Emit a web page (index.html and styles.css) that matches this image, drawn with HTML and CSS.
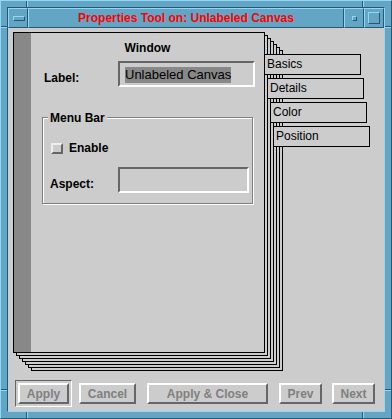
FILE: index.html
```html
<!DOCTYPE html>
<html lang="en">
  <head>
    <meta charset="UTF-8" />
    <title>Properties Tool on: Unlabeled Canvas</title>
    <link rel="stylesheet" href="styles.css">
  </head>
  <body>
    <div class="frame">
      <div class="frame-inner">
        <div class="titlebar">
          <div class="tb-btn"><span class="menu-icon"></span></div>
          <div class="tb-title">Properties Tool on: Unlabeled Canvas</div>
          <div class="tb-btn"><span class="min-icon"></span></div>
          <div class="tb-btn"><span class="max-icon"></span></div>
        </div>

        <div class="client">
          <div class="notebook">
            <div class="page">
              <div class="binding"></div>
              <div class="page-body">
                <div class="heading">Window</div>

                <div class="form-row label-row">
                  <span class="row-label">Label:</span>
                  <div class="field field-label"><span class="selected">Unlabeled Canvas</span></div>
                </div>

                <div class="group">
                  <div class="group-title">Menu Bar</div>
                  <div class="check-row">
                    <span class="checkbox"></span>
                    <span class="check-text">Enable</span>
                  </div>
                  <div class="form-row aspect-row">
                    <span class="row-label">Aspect:</span>
                    <div class="field field-aspect"></div>
                  </div>
                </div>
              </div>
            </div>

            <div class="tabs">
              <div class="tab">Basics</div>
              <div class="tab">Details</div>
              <div class="tab">Color</div>
              <div class="tab">Position</div>
            </div>
          </div>

          <div class="actions">
            <div class="default-ring"><button class="btn btn-apply">Apply</button></div>
            <button class="btn btn-cancel">Cancel</button>
            <button class="btn btn-close">Apply &amp; Close</button>
            <button class="btn btn-prev">Prev</button>
            <button class="btn btn-next">Next</button>
          </div>
        </div>
      </div>
    </div>
  </body>
</html>
```

FILE: styles.css
```css
body {
  margin: 0;
  font-family: "Liberation Sans", Arial, sans-serif;
  font-size: 12px;
  line-height: 14px;
  color: #000;
}

/* window manager frame */
.frame {
  width: 392px;
  height: 419px;
  box-sizing: border-box;
  border: 1px solid;
  border-color: #94d6f4 #2b5870 #2b5870 #94d6f4;
  padding: 6px;
  background-color: #63a5c5;
  background-repeat: no-repeat;
  background-image:
    linear-gradient(to right, #2b5870 0 1px, #94d6f4 1px 2px),
    linear-gradient(to right, #2b5870 0 1px, #94d6f4 1px 2px),
    linear-gradient(to right, #2b5870 0 1px, #94d6f4 1px 2px),
    linear-gradient(to right, #2b5870 0 1px, #94d6f4 1px 2px),
    linear-gradient(to bottom, #2b5870 0 1px, #94d6f4 1px 2px),
    linear-gradient(to bottom, #2b5870 0 1px, #94d6f4 1px 2px),
    linear-gradient(to bottom, #2b5870 0 1px, #94d6f4 1px 2px),
    linear-gradient(to bottom, #2b5870 0 1px, #94d6f4 1px 2px);
  background-size: 2px 6px, 2px 6px, 2px 6px, 2px 6px, 6px 2px, 6px 2px, 6px 2px, 6px 2px;
  background-position:
    left 25px top 0,
    right 27px top 0,
    left 25px bottom 0,
    right 27px bottom 0,
    left 0 top 25px,
    right 0 top 25px,
    left 0 bottom 27px,
    right 0 bottom 27px;
}

.frame-inner {
  height: 100%;
  box-sizing: border-box;
  border: 1px solid;
  border-color: #2b5870 #94d6f4 #94d6f4 #2b5870;
  display: flex;
  flex-direction: column;
}

.titlebar {
  display: flex;
  height: 20px;
}

.tb-btn,
.tb-title {
  box-sizing: border-box;
  border: 1px solid;
  border-color: #94d6f4 #2b5870 #2b5870 #94d6f4;
}

.tb-btn {
  width: 20px;
  display: flex;
  align-items: center;
  justify-content: center;
}

.tb-title {
  flex: 1;
  text-align: center;
  color: #ff0000;
  font-weight: bold;
  font-size: 12px;
  line-height: 18px;
}

.menu-icon,
.min-icon,
.max-icon {
  display: block;
  box-sizing: border-box;
  border: 1px solid;
  border-color: #94d6f4 #2b5870 #2b5870 #94d6f4;
}

.menu-icon {
  width: 12px;
  height: 5px;
  margin-left: 1px;
}

.min-icon {
  width: 5px;
  height: 5px;
}

.max-icon {
  width: 12px;
  height: 12px;
}

/* dialog area */
.client {
  flex: 1;
  background-color: #cccccc;
  padding: 4px 0 0 5px;
}

.notebook {
  display: flex;
}

.page {
  width: 252px;
  height: 321px;
  box-sizing: border-box;
  border: 1px solid #000;
  background-color: #cccccc;
  display: flex;
  box-shadow:
    3px 3px 0 -1px #cccccc, 3px 3px 0 0 #000,
    6px 6px 0 -1px #cccccc, 6px 6px 0 0 #000,
    9px 9px 0 -1px #cccccc, 9px 9px 0 0 #000,
    12px 12px 0 -1px #cccccc, 12px 12px 0 0 #000,
    15px 15px 0 -1px #cccccc, 15px 15px 0 0 #000,
    18px 18px 0 -1px #cccccc, 18px 18px 0 0 #000;
}

.binding {
  width: 17px;
  background-color: #888888;
}

.page-body {
  flex: 1;
  padding-top: 8px;
}

.heading {
  text-align: center;
  font-weight: bold;
}

.form-row {
  display: flex;
}

.label-row {
  margin-top: 6px;
  padding-left: 13px;
}

.row-label {
  font-weight: bold;
  margin-top: 10px;
}

.label-row .row-label {
  width: 74px;
}

.field {
  box-sizing: border-box;
  height: 26px;
  border: 2px solid;
  border-color: #666666 #ffffff #ffffff #666666;
}

.field-label {
  width: 137px;
  padding: 4px 0 0 5px;
}

.selected {
  display: inline-block;
  background-color: #888888;
  font-size: 13px;
  line-height: 16px;
}

.group {
  margin: 30px 11px 0;
  padding: 0 3px 10px 7px;
  border: 1px solid #808080;
  box-shadow: inset 1px 1px 0 #ffffff, 1px 1px 0 #ffffff;
}

.group-title {
  width: fit-content;
  margin: -7px 0 0 -2px;
  padding: 0 2px;
  background-color: #cccccc;
  font-weight: bold;
}

.check-row {
  display: flex;
  margin-top: 16px;
  padding-left: 1px;
}

.checkbox {
  width: 12px;
  height: 11px;
  box-sizing: border-box;
  margin: 2px 6px 0 0;
  border: 2px solid;
  border-color: #eeeeee #666666 #666666 #eeeeee;
}

.check-text {
  font-weight: bold;
}

.aspect-row {
  margin-top: 12px;
}

.aspect-row .row-label {
  width: 68px;
}

.field-aspect {
  width: 131px;
}

/* notebook tabs */
.tabs {
  display: flex;
  flex-direction: column;
  align-items: flex-start;
  padding-top: 22px;
  margin-left: -1px;
}

.tab {
  width: 97px;
  height: 21px;
  box-sizing: border-box;
  border: 1px solid #000;
  background-color: #cccccc;
  padding: 2px 0 0 2px;
  margin-bottom: 3px;
}

.tab:nth-child(2) {
  margin-left: 3px;
}

.tab:nth-child(3) {
  margin-left: 6px;
}

.tab:nth-child(4) {
  margin-left: 9px;
}

/* bottom buttons */
.actions {
  display: flex;
  align-items: center;
  margin: 27px 0 0 2px;
}

.default-ring {
  display: flex;
  padding: 2px;
  border: 1px solid;
  border-color: #666666 #ffffff #ffffff #666666;
}

.btn {
  height: 21px;
  box-sizing: border-box;
  margin: 0;
  padding: 0;
  border: 2px solid;
  border-color: #ffffff #666666 #666666 #ffffff;
  background-color: #cccccc;
  font-family: "Liberation Sans", Arial, sans-serif;
  font-size: 12px;
  font-weight: bold;
  color: #808080;
}

.btn-apply {
  width: 51px;
}

.btn-cancel {
  width: 57px;
  margin-left: 7px;
}

.btn-close {
  width: 121px;
  margin-left: 11px;
}

.btn-prev {
  width: 43px;
  margin-left: 11px;
}

.btn-next {
  width: 43px;
  margin-left: 10px;
}
```
